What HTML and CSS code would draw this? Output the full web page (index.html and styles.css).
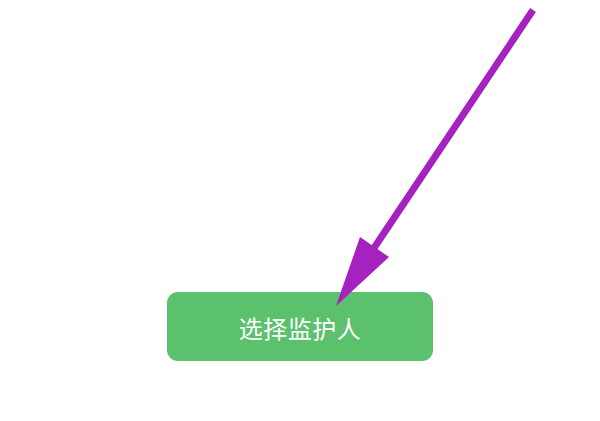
FILE: index.html
```html
<!DOCTYPE html>
<html lang="zh">
<head>
<meta charset="utf-8">
<link rel="stylesheet" href="styles.css">
</head>
<body>
<div class="page">
  <button class="btn">选择监护人</button>
  <svg class="arrow" width="600" height="421" viewBox="0 0 600 421">
    <line x1="533" y1="10" x2="370" y2="254" stroke="#a622bf" stroke-width="7" stroke-linecap="butt"/>
    <polygon points="336,306 360,237 389,257" fill="#a622bf"/>
  </svg>
</div>
</body>
</html>
```
FILE: styles.css
```css
html, body {
  margin: 0;
  padding: 0;
  background: #ffffff;
}
.page {
  position: relative;
  width: 600px;
  height: 421px;
  display: flex;
  flex-direction: column;
  align-items: center;
  padding-top: 292px;
  box-sizing: border-box;
}
.btn {
  width: 266px;
  height: 69px;
  border: none;
  border-radius: 11px;
  background: #5bc16c;
  color: #ffffff;
  font-family: "Noto Sans CJK SC", sans-serif;
  font-size: 24px;
  letter-spacing: 0.5px;
  padding: 2px 0 0 0;
}
.arrow {
  position: absolute;
  left: 0;
  top: 0;
}
```
